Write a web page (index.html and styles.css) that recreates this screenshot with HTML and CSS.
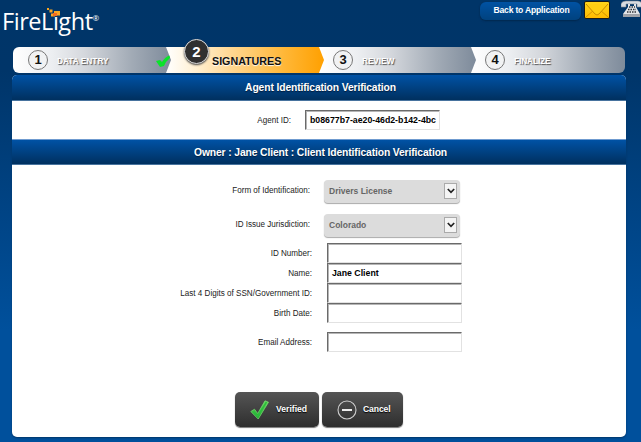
FILE: index.html
```html
<!DOCTYPE html>
<html lang="en">
<head>
<meta charset="utf-8">
<title>FireLight</title>
<link rel="stylesheet" href="styles.css">
</head>
<body>
<header class="top">
  <div class="logo"><span class="logo-text">FireLight</span><sup>®</sup>
    <svg class="sparks" width="15" height="10" viewBox="0 0 15 10"><path fill="#f6a623" d="M1 0h2v2H1zM3.500 1.500h3v3h-3zM8 3h6v4.500H8zM5 5.500h4v3H5z"/><path fill="#f26a21" d="M7 5h4v3H7z"/></svg>
  </div>
  <div class="tools">
    <a class="back">Back to Application</a>
    <svg class="mail" width="26" height="18" viewBox="0 0 26 18"><defs><linearGradient id="m" x2="0" y2="1"><stop stop-color="#ffd51c"/><stop offset="1" stop-color="#ffb900"/></linearGradient></defs><rect x=".5" y=".5" width="25" height="17" rx="1.5" fill="url(#m)" stroke="#1b1a16"/><path d="M2 16l8-7M24 16l-8-7" stroke="#d69300" fill="none"/><path d="M2 3l9 10q2 2 4 0l9-10" fill="#ffce12" stroke="#c98b00"/></svg>
    <svg class="phone" width="20" height="18" viewBox="0 0 20 18"><path d="M0 7V4Q1 1 5 1h12q3 0 4 3v3h-5V4H5v3z" fill="#d8dce1" stroke="#7f8791" stroke-width=".6"/><path d="M7 4h2v2h4V4h2v3l4 7v3H2v-3l5-7z" fill="#e2e4e7"/><path d="M2 14h17v3H2z" fill="#9da1a8"/><path d="M8 7h6M7 9.5h8M6 12h10" stroke="#30343b" stroke-width="1.5" stroke-dasharray="1.5 1"/></svg>
  </div>
</header>
<nav class="steps">
  <div class="step s1"><span class="num">1</span><span class="name n1">DATA ENTRY</span>
    <svg class="done" width="15" height="12" viewBox="0 0 15 12"><path d="M0 6l4-1 2 2q3-5 8-7v3q-4 3-6 8l-4 1z" fill="#0be32b"/></svg></div>
  <div class="step s2"><span class="name">SIGNATURES</span></div>
  <div class="step s3"><span class="num">3</span><span class="name">REVIEW</span></div>
  <div class="step s4"><span class="num">4</span><span class="name">FINALIZE</span></div>
  <span class="current">2</span>
</nav>
<main class="panel">
  <h2 class="bar first">Agent Identification Verification</h2>
  <div class="agent"><label>Agent ID:</label><div class="input id">b08677b7-ae20-46d2-b142-4bc</div></div>
  <h2 class="bar second">Owner : Jane Client : Client Identification Verification</h2>
  <div class="form">
    <div class="row sel"><label>Form of Identification:</label><div class="select">Drivers License<span class="arrow"><svg width="8" height="6" viewBox="0 0 8 6"><path d="M.8 1L4 4.3 7.2 1" fill="none" stroke="#222" stroke-width="1.7"/></svg></span></div></div>
    <div class="row sel"><label>ID Issue Jurisdiction:</label><div class="select">Colorado<span class="arrow"><svg width="8" height="6" viewBox="0 0 8 6"><path d="M.8 1L4 4.3 7.2 1" fill="none" stroke="#222" stroke-width="1.7"/></svg></span></div></div>
    <div class="row"><label>ID Number:</label><div class="input"></div></div>
    <div class="row"><label>Name:</label><div class="input">Jane Client</div></div>
    <div class="row"><label>Last 4 Digits of SSN/Government ID:</label><div class="input"></div></div>
    <div class="row"><label>Birth Date:</label><div class="input"></div></div>
    <div class="row email"><label>Email Address:</label><div class="input"></div></div>
  </div>
  <div class="actions">
    <div class="btn verified"><svg width="19" height="20" viewBox="0 0 19 20"><defs><linearGradient id="g" x2="0" y2="1"><stop stop-color="#72df61"/><stop offset="1" stop-color="#16a32c"/></linearGradient></defs><path d="M.8 11.5l3.7-2.3 3.2 4.3L15 .8l3.5 1.4L8.2 19z" fill="url(#g)" stroke="#72d36c" stroke-width=".8"/><path d="M3.5 11.5l4.2 5L16.5 2" stroke="#2bbd3c" stroke-width="1.5" fill="none"/></svg><span>Verified</span></div>
    <div class="btn cancel"><svg width="20" height="20" viewBox="0 0 20 20"><circle cx="10" cy="10" r="9" fill="none" stroke="#cfcfcf" stroke-width="1.1"/><path d="M5 10h10" stroke="#eee" stroke-width="2"/></svg><span>Cancel</span></div>
  </div>
</main>
</body>
</html>
```
FILE: styles.css
```css
* { box-sizing: border-box; }
html { height: 442px; }
body {
  margin: 0;
  width: 641px;
  height: 442px;
  overflow: hidden;
  font-family: "Liberation Sans", Arial, sans-serif;
  background: linear-gradient(#003568 0, #003569 70px, #00509c 330px, #00509c);
  color: #222;
}
.top { height: 47px; display: flex; justify-content: space-between; }
.logo { position: relative; color: #fff; padding: 7px 0 0 2px; font: 23.5px/29px "Open Sans", sans-serif; letter-spacing: -.45px; white-space: nowrap; }
.logo sup { font-size: 8px; line-height: 8px; vertical-align: 9px; }
.sparks { position: absolute; left: 46px; top: 8px; }
.tools { display: flex; align-items: flex-start; }
.back {
  width: 101px; height: 18px; margin: 2px 3px 0 0;
  border-radius: 6px;
  background: linear-gradient(#0052a3, #00427f);
  box-shadow: 0 1px 2px #00264c;
  color: #fff; text-align: center;
  font-weight: bold; font-size: 8.6px; line-height: 17px; letter-spacing: -.21px;
  padding-left: 2px;
}
.mail { margin: 1px 11px 0 0; }
.steps { position: relative; display: flex; margin-left: 13px; width: 612px; height: 26px; }
.step {
  display: flex; align-items: center;
  height: 26px; width: 158px;
  background: linear-gradient(90deg, #fff 0, #eceef1 25%, #d5d8dd 45%, #a2abb6 75%, #7e8b9b);
  clip-path: polygon(0 0, calc(100% - 5px) 0, 100% 50%, calc(100% - 5px) 100%, 0 100%);
}
.s1 { z-index: 4; border-radius: 6px 0 0 6px; padding-left: 15px; position: relative; }
.s2 { z-index: 3; margin-left: -5px; padding-left: 46px; background: linear-gradient(90deg, #fff 0, #ffefcf 20%, #ffd895 40%, #ffb737 75%, #ffa000); }
.s3 { z-index: 2; margin-left: -5px; padding-left: 14px; width: 157px; }
.s4 { z-index: 1; margin-left: -5px; padding-left: 14px; width: 154px; clip-path: none; border-radius: 0 6px 6px 0; }
.num {
  width: 20px; height: 20px; flex: none;
  border: 1.3px solid #777; border-radius: 50%;
  background: #f1f2f3; color: #111;
  font-weight: bold; font-size: 13px; line-height: 18px; text-align: center;
}
.step .name { margin: 2px 0 0 9px; font-weight: bold; font-size: 8.3px; line-height: 12px; color: #fff; text-shadow: 1px 1px 1px #555; }
.s2 .name { margin: 2px 0 0; font-size: 10.7px; color: #111; text-shadow: 0 1px 1px #fff; }
.s3 .name, .s4 .name { letter-spacing: -.1px; }
.done { position: absolute; left: 143px; top: 8px; }
.current {
  position: absolute; z-index: 5; left: 171px; top: -8px;
  width: 25px; height: 25px; border-radius: 50%;
  border: 1.5px solid #dedede; background: #303030;
  box-shadow: 0 1px 2px #444;
  color: #fff; font-weight: bold; font-size: 15px; line-height: 23px; text-align: center;
}
.panel { width: 614px; height: 362px; margin: 2px 0 0 12px; background: #fff; border-radius: 5px; overflow: hidden; box-shadow: 0 1px 2px #003568; }
.bar {
  margin: 0; height: 26px;
  border-bottom: 1px solid #47739e;
  background: linear-gradient(#0052a5, #00305f);
  color: #fff; text-align: center; text-shadow: 0 1px 1px #001d3d;
  font-size: 10.3px; line-height: 26px; font-weight: bold; letter-spacing: -.11px;
  padding-left: 3px;
}
.second { border-top: 1px solid #6f9bd0; line-height: 25px; }
.agent { display: flex; height: 38px; padding-top: 9px; }
label {
  text-align: right; font-size: 9.2px; line-height: 21px; white-space: nowrap; color: #222;
  transform: scaleX(.88); transform-origin: right;
}
.agent label { width: 279px; margin-right: 14px; }
.input {
  width: 135px; height: 20px;
  border: 1px solid; border-color: #6a6a6a #e2e2e2 #e2e2e2 #6a6a6a;
  box-shadow: inset 1px 1px #b5b5b5;
  padding-left: 4px;
  color: #000; font-size: 8.75px; line-height: 19px; font-weight: bold; white-space: nowrap; overflow: hidden;
}
.form { padding-top: 15px; }
.row { display: flex; height: 20px; }
.row label { width: 300px; margin-right: 15px; }
.sel { height: 34px; }
.sel + .sel { height: 29px; }
.sel label { width: 298px; margin-right: 14px; line-height: 21px; }
.select {
  width: 136px; height: 23px; border-radius: 4px;
  display: flex; align-items: center; justify-content: space-between;
  background: #dcdcdc; box-shadow: 0 1px 1px #aaa;
  color: #666; font-size: 8.5px; font-weight: bold; padding: 0 3px 1px 5px;
}
.arrow { width: 13px; height: 16px; border: 1px solid #aaa; background: #f4f4f4; display: flex; align-items: center; justify-content: center; }
.email { margin-top: 9px; }
.actions { display: flex; gap: 3px; margin: 40px 0 0 223px; }
.btn {
  display: flex; align-items: center; height: 35px; width: 84px;
  border-radius: 5px; background: linear-gradient(#555, #2e2e2e);
  box-shadow: 0 1px 1px #777;
  color: #fff; font-size: 8.6px; font-weight: bold; text-shadow: 0 1px 1px #000;
  padding-left: 15px;
}
.btn span { margin: -1px 0 0 7px; }
.cancel { width: 81px; }
.cancel span { margin-left: 6px; letter-spacing: -.1px; }
```
